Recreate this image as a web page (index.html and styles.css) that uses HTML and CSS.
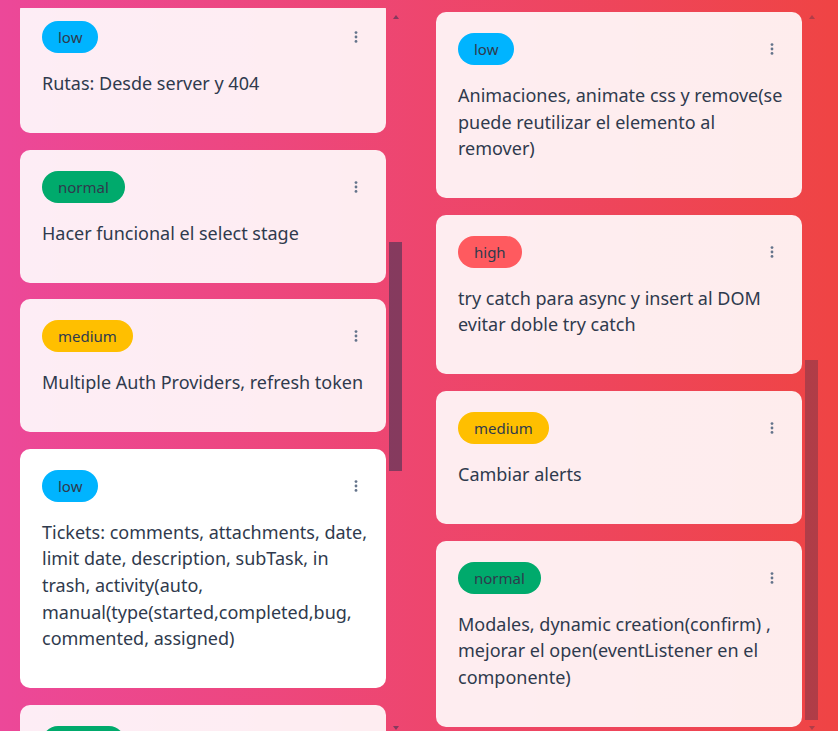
FILE: index.html
```html
<!DOCTYPE html>
<html lang="es">
<head>
<meta charset="utf-8">
<title>Tablero</title>
<link rel="stylesheet" href="styles.css">
</head>
<body>
<main class="board">
  <section class="column col-left">
    <div class="scroller">
      <div class="cards">
        <article class="card"><div class="card-head"><span class="badge badge-normal">normal</span><button class="dots" aria-label="Opciones"><svg width="4" height="12" viewBox="0 0 4 12"><circle cx="2" cy="1.6" r="1.4"/><circle cx="2" cy="6" r="1.4"/><circle cx="2" cy="10.4" r="1.4"/></svg></button></div><p class="card-text">Login y registro de usuarios con validación</p></article>
        <article class="card"><div class="card-head"><span class="badge badge-high">high</span><button class="dots" aria-label="Opciones"><svg width="4" height="12" viewBox="0 0 4 12"><circle cx="2" cy="1.6" r="1.4"/><circle cx="2" cy="6" r="1.4"/><circle cx="2" cy="10.4" r="1.4"/></svg></button></div><p class="card-text">Drag and drop de tickets entre columnas</p></article>
        <article class="card"><div class="card-head"><span class="badge badge-low">low</span><button class="dots" aria-label="Opciones"><svg width="4" height="12" viewBox="0 0 4 12"><circle cx="2" cy="1.6" r="1.4"/><circle cx="2" cy="6" r="1.4"/><circle cx="2" cy="10.4" r="1.4"/></svg></button></div><p class="card-text">Modo oscuro</p></article>
        <article class="card"><div class="card-head"><span class="badge badge-medium">medium</span><button class="dots" aria-label="Opciones"><svg width="4" height="12" viewBox="0 0 4 12"><circle cx="2" cy="1.6" r="1.4"/><circle cx="2" cy="6" r="1.4"/><circle cx="2" cy="10.4" r="1.4"/></svg></button></div><p class="card-text">Guardar el tablero en localStorage al cerrar</p></article>
        <article class="card" id="anchor-left"><div class="card-head"><span class="badge badge-low">low</span><button class="dots" aria-label="Opciones"><svg width="4" height="12" viewBox="0 0 4 12"><circle cx="2" cy="1.6" r="1.4"/><circle cx="2" cy="6" r="1.4"/><circle cx="2" cy="10.4" r="1.4"/></svg></button></div><p class="card-text">Rutas: Desde server y 404</p></article>
        <article class="card"><div class="card-head"><span class="badge badge-normal">normal</span><button class="dots" aria-label="Opciones"><svg width="4" height="12" viewBox="0 0 4 12"><circle cx="2" cy="1.6" r="1.4"/><circle cx="2" cy="6" r="1.4"/><circle cx="2" cy="10.4" r="1.4"/></svg></button></div><p class="card-text">Hacer funcional el select stage</p></article>
        <article class="card"><div class="card-head"><span class="badge badge-medium">medium</span><button class="dots" aria-label="Opciones"><svg width="4" height="12" viewBox="0 0 4 12"><circle cx="2" cy="1.6" r="1.4"/><circle cx="2" cy="6" r="1.4"/><circle cx="2" cy="10.4" r="1.4"/></svg></button></div><p class="card-text">Multiple Auth Providers, refresh token</p></article>
        <article class="card card-hover"><div class="card-head"><span class="badge badge-low">low</span><button class="dots" aria-label="Opciones"><svg width="4" height="12" viewBox="0 0 4 12"><circle cx="2" cy="1.6" r="1.4"/><circle cx="2" cy="6" r="1.4"/><circle cx="2" cy="10.4" r="1.4"/></svg></button></div><p class="card-text">Tickets: comments, attachments, date, limit date, description, subTask, in trash, activity(auto, manual(type(started,completed,bug, commented, assigned)</p></article>
        <article class="card"><div class="card-head"><span class="badge badge-normal">normal</span><button class="dots" aria-label="Opciones"><svg width="4" height="12" viewBox="0 0 4 12"><circle cx="2" cy="1.6" r="1.4"/><circle cx="2" cy="6" r="1.4"/><circle cx="2" cy="10.4" r="1.4"/></svg></button></div><p class="card-text">Filtros por prioridad</p></article>
        <article class="card"><div class="card-head"><span class="badge badge-high">high</span><button class="dots" aria-label="Opciones"><svg width="4" height="12" viewBox="0 0 4 12"><circle cx="2" cy="1.6" r="1.4"/><circle cx="2" cy="6" r="1.4"/><circle cx="2" cy="10.4" r="1.4"/></svg></button></div><p class="card-text">Validación de formularios y mensajes de error</p></article>
        <article class="card"><div class="card-head"><span class="badge badge-low">low</span><button class="dots" aria-label="Opciones"><svg width="4" height="12" viewBox="0 0 4 12"><circle cx="2" cy="1.6" r="1.4"/><circle cx="2" cy="6" r="1.4"/><circle cx="2" cy="10.4" r="1.4"/></svg></button></div><p class="card-text">Notificaciones</p></article>
        <article class="card"><div class="card-head"><span class="badge badge-medium">medium</span><button class="dots" aria-label="Opciones"><svg width="4" height="12" viewBox="0 0 4 12"><circle cx="2" cy="1.6" r="1.4"/><circle cx="2" cy="6" r="1.4"/><circle cx="2" cy="10.4" r="1.4"/></svg></button></div><p class="card-text">Responsive del tablero para móviles y tablets, menú lateral colapsable y gestos táctiles</p></article>
        <article class="card"><div class="card-head"><span class="badge badge-normal">normal</span><button class="dots" aria-label="Opciones"><svg width="4" height="12" viewBox="0 0 4 12"><circle cx="2" cy="1.6" r="1.4"/><circle cx="2" cy="6" r="1.4"/><circle cx="2" cy="10.4" r="1.4"/></svg></button></div><p class="card-text">Tests unitarios</p></article>
      </div>
    </div>
    <div class="rail" aria-hidden="true">
      <span class="rail-btn"><span class="arrow-up"></span></span>
      <div class="rail-track"><div class="rail-thumb"></div></div>
      <span class="rail-btn"><span class="arrow-down"></span></span>
    </div>
  </section>
  <section class="column col-right">
    <div class="scroller">
      <div class="cards">
        <article class="card"><div class="card-head"><span class="badge badge-normal">normal</span><button class="dots" aria-label="Opciones"><svg width="4" height="12" viewBox="0 0 4 12"><circle cx="2" cy="1.6" r="1.4"/><circle cx="2" cy="6" r="1.4"/><circle cx="2" cy="10.4" r="1.4"/></svg></button></div><p class="card-text">Crear columnas nuevas desde el botón agregar</p></article>
        <article class="card"><div class="card-head"><span class="badge badge-low">low</span><button class="dots" aria-label="Opciones"><svg width="4" height="12" viewBox="0 0 4 12"><circle cx="2" cy="1.6" r="1.4"/><circle cx="2" cy="6" r="1.4"/><circle cx="2" cy="10.4" r="1.4"/></svg></button></div><p class="card-text">Editar nombre de columna con doble click</p></article>
        <article class="card"><div class="card-head"><span class="badge badge-high">high</span><button class="dots" aria-label="Opciones"><svg width="4" height="12" viewBox="0 0 4 12"><circle cx="2" cy="1.6" r="1.4"/><circle cx="2" cy="6" r="1.4"/><circle cx="2" cy="10.4" r="1.4"/></svg></button></div><p class="card-text">Eliminar tickets</p></article>
        <article class="card"><div class="card-head"><span class="badge badge-medium">medium</span><button class="dots" aria-label="Opciones"><svg width="4" height="12" viewBox="0 0 4 12"><circle cx="2" cy="1.6" r="1.4"/><circle cx="2" cy="6" r="1.4"/><circle cx="2" cy="10.4" r="1.4"/></svg></button></div><p class="card-text">Ordenar tickets por fecha de creación y prioridad</p></article>
        <article class="card"><div class="card-head"><span class="badge badge-low">low</span><button class="dots" aria-label="Opciones"><svg width="4" height="12" viewBox="0 0 4 12"><circle cx="2" cy="1.6" r="1.4"/><circle cx="2" cy="6" r="1.4"/><circle cx="2" cy="10.4" r="1.4"/></svg></button></div><p class="card-text">Animaciones, animate css y remove(se puede reutilizar el elemento al remover)</p></article>
        <article class="card"><div class="card-head"><span class="badge badge-high">high</span><button class="dots" aria-label="Opciones"><svg width="4" height="12" viewBox="0 0 4 12"><circle cx="2" cy="1.6" r="1.4"/><circle cx="2" cy="6" r="1.4"/><circle cx="2" cy="10.4" r="1.4"/></svg></button></div><p class="card-text">try catch para async y insert al DOM evitar doble try catch</p></article>
        <article class="card"><div class="card-head"><span class="badge badge-medium">medium</span><button class="dots" aria-label="Opciones"><svg width="4" height="12" viewBox="0 0 4 12"><circle cx="2" cy="1.6" r="1.4"/><circle cx="2" cy="6" r="1.4"/><circle cx="2" cy="10.4" r="1.4"/></svg></button></div><p class="card-text">Cambiar alerts</p></article>
        <article class="card"><div class="card-head"><span class="badge badge-normal">normal</span><button class="dots" aria-label="Opciones"><svg width="4" height="12" viewBox="0 0 4 12"><circle cx="2" cy="1.6" r="1.4"/><circle cx="2" cy="6" r="1.4"/><circle cx="2" cy="10.4" r="1.4"/></svg></button></div><p class="card-text">Modales, dynamic creation(confirm) , mejorar el open(eventListener en el componente)</p></article>
      </div>
    </div>
    <div class="rail" aria-hidden="true">
      <span class="rail-btn"><span class="arrow-up"></span></span>
      <div class="rail-track"><div class="rail-thumb"></div></div>
      <span class="rail-btn"><span class="arrow-down"></span></span>
    </div>
  </section>
</main>
<script src="app.js"></script>
</body>
</html>
```

FILE: styles.css
```css
html, body {
  margin: 0;
  height: 731px;
  overflow: hidden;
}

body {
  background: linear-gradient(to right, #ec4899, #ef4444);
  font-family: "Noto Sans", "Open Sans", sans-serif;
  color: #334155;
}

.board {
  display: flex;
  gap: 33px;
  padding: 8px 0 0 20px;
  align-items: flex-start;
}

.column {
  flex: 0 0 383px;
  width: 383px;
  height: 727px;
  display: flex;
}

.scroller {
  flex: 1;
  min-width: 0;
  height: 100%;
  overflow-y: scroll;
  scrollbar-width: none;
}

.scroller::-webkit-scrollbar {
  display: none;
}

.cards {
  display: flex;
  flex-direction: column;
  gap: 16.6px;
  padding: 8px 2px 8px 0;
}

.card {
  background: rgba(255, 255, 255, 0.9);
  border-radius: 10px;
  padding: 21px 12px 36.4px 22px;
}

.card-hover {
  background: #ffffff;
}

.card-head {
  display: flex;
  align-items: center;
  justify-content: space-between;
  height: 32px;
  margin-right: 10px;
}

.badge {
  display: inline-block;
  height: 32px;
  line-height: 32px;
  padding: 0 16px;
  border-radius: 16px;
  font-size: 15px;
  color: #2f3a4d;
}

.badge-low { background: #00b4ff; }
.badge-normal { background: #00aa6c; }
.badge-medium { background: #ffbf00; }
.badge-high { background: #ff5a5f; }

.dots {
  display: flex;
  align-items: center;
  justify-content: center;
  width: 16px;
  height: 20px;
  padding: 0;
  border: 0;
  background: transparent;
  fill: #64748b;
}

.card-text {
  margin: 17px 0 0 0;
  font-size: 18px;
  line-height: 26.6px;
  color: #2f3a4d;
}

/* scrollbar rail */
.rail {
  flex: 0 0 15px;
  width: 15px;
  height: 100%;
  display: flex;
  flex-direction: column;
}

.col-left .rail { --bar: rgba(30, 45, 75, 0.5); }
.col-right .rail { --bar: rgba(30, 45, 75, 0.3); }

.rail-btn {
  flex: 0 0 15px;
  height: 15px;
  display: flex;
  align-items: center;
  justify-content: center;
}

.arrow-up {
  width: 0;
  height: 0;
  border-left: 3.5px solid transparent;
  border-right: 3.5px solid transparent;
  border-bottom: 4px solid var(--bar);
  margin-top: 3px;
}

.arrow-down {
  width: 0;
  height: 0;
  border-left: 3.5px solid transparent;
  border-right: 3.5px solid transparent;
  border-top: 4px solid var(--bar);
}

.rail-track {
  flex: 1;
  padding: 0 1px;
}

.rail-thumb {
  background: var(--bar);
  width: 13px;
}
```

FILE: app.js
```js
function syncRail(column) {
  const scroller = column.querySelector('.scroller');
  const track = column.querySelector('.rail-track');
  const thumb = column.querySelector('.rail-thumb');
  const trackH = track.clientHeight;
  const ratio = scroller.clientHeight / scroller.scrollHeight;
  thumb.style.height = (trackH * ratio) + 'px';
  thumb.style.marginTop = (trackH * scroller.scrollTop / scroller.scrollHeight) + 'px';
}

const leftCol = document.querySelector('.col-left');
const leftScroller = leftCol.querySelector('.scroller');
const anchor = document.getElementById('anchor-left');
leftScroller.scrollTop = anchor.getBoundingClientRect().bottom - 133;

const rightCol = document.querySelector('.col-right');
const rightScroller = rightCol.querySelector('.scroller');
rightScroller.scrollTop = rightScroller.scrollHeight;

syncRail(leftCol);
syncRail(rightCol);
```
